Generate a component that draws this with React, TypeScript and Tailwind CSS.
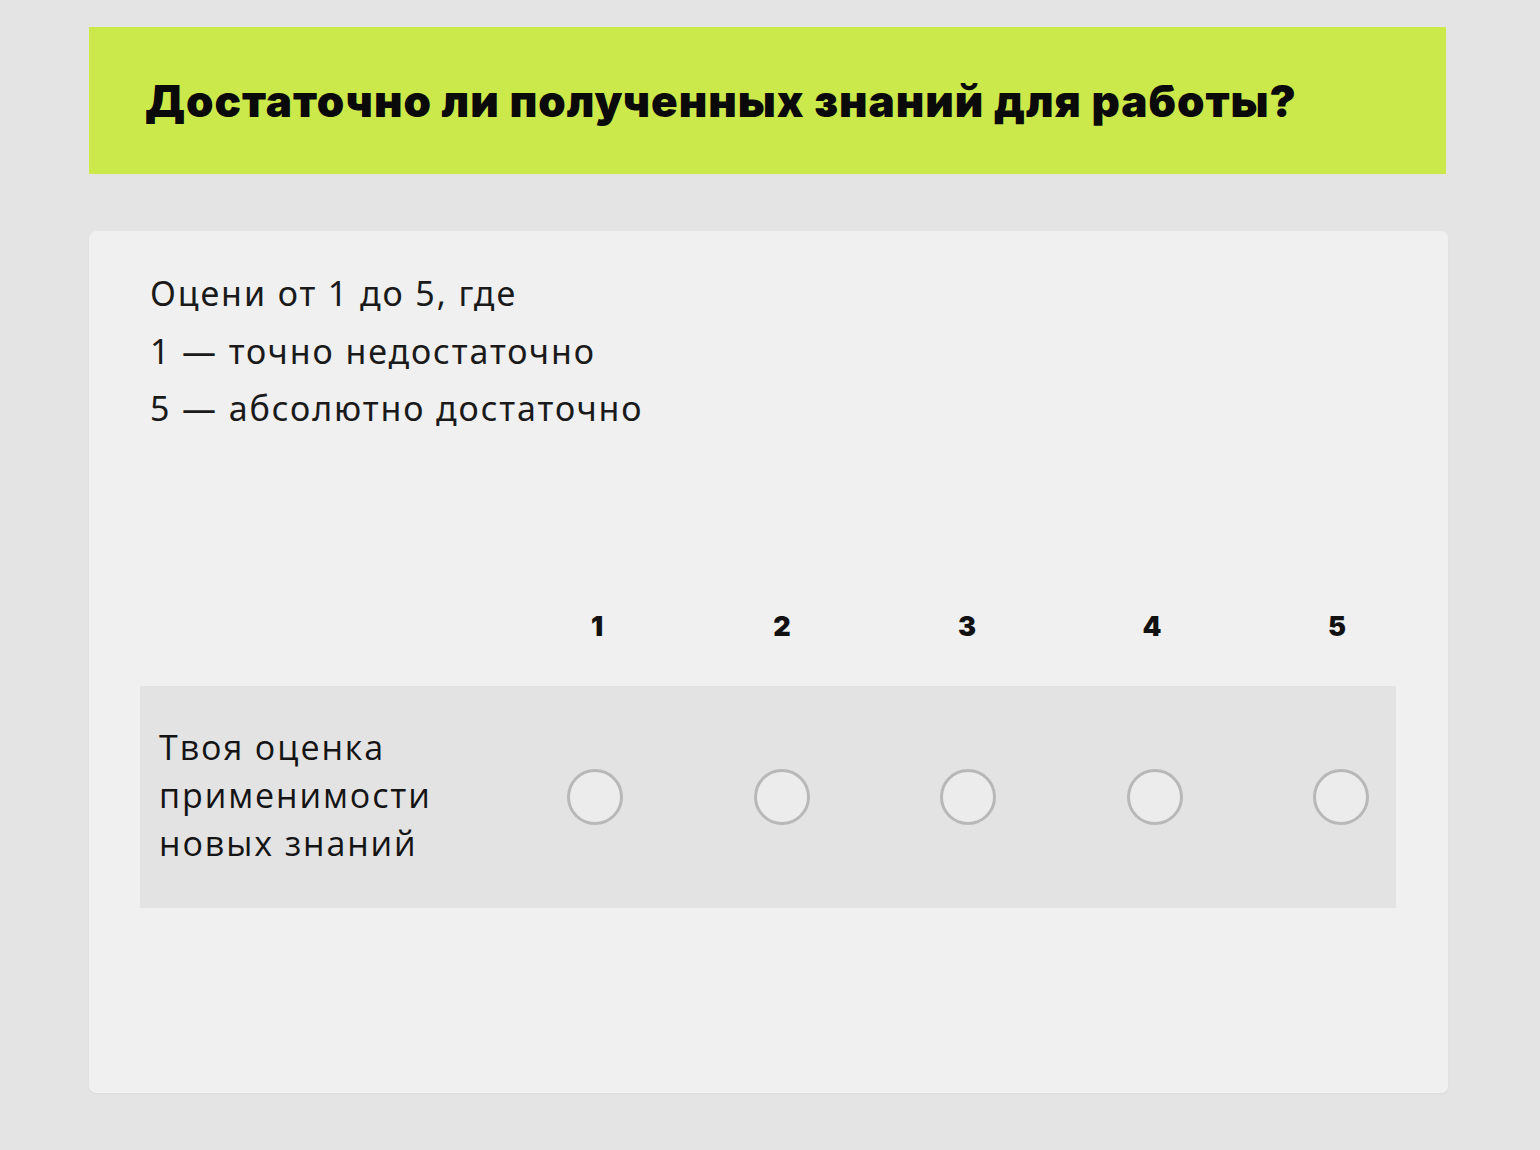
import React from "react";

export default function App() {
  const nums = [1, 2, 3, 4, 5];
  return (
    <div className="min-h-[1150px] w-[1540px] bg-[#e4e4e4] pt-[27px] pl-[89px]">
      <div className="flex h-[147px] w-[1357px] items-center bg-[#cce94b] pl-[56px]">
        <h1
          className="text-[44px] font-black leading-none tracking-[0.95px] text-[#0a0a0a]"
          style={{ fontFamily: "Inter, 'Noto Sans', sans-serif" }}
        >
          Достаточно ли полученных знаний для работы?
        </h1>
      </div>

      <div className="mt-[57px] h-[862px] w-[1359px] rounded-[7px] bg-[#f0f0f0] pt-[34px] shadow-[0_1px_2px_rgba(0,0,0,0.04)]">
        <div
          className="pl-[61px] text-[34px] leading-[57.5px] tracking-[1.9px] text-[#1a1a1a]"
          style={{ fontFamily: "'Noto Sans', 'Open Sans', sans-serif" }}
        >
          <p>Оцени от 1 до 5, где</p>
          <p>1 — точно недостаточно</p>
          <p>5 — абсолютно достаточно</p>
        </div>

        <div
          className="mt-[176px] flex gap-[129px] pl-[480px]"
          style={{ fontFamily: "Inter, 'Noto Sans', sans-serif" }}
        >
          {nums.map((n) => (
            <div
              key={n}
              className="w-[56px] text-center text-[27px] font-black leading-[26px] text-[#111]"
            >
              {n}
            </div>
          ))}
        </div>

        <div className="ml-[51px] mt-[46px] flex h-[222px] w-[1256px] items-center bg-[#e3e3e3]">
          <div
            className="w-[427px] pb-[4px] pl-[19px] text-[34px] leading-[48px] tracking-[1.9px] text-[#141414]"
            style={{ fontFamily: "'Open Sans', 'Noto Sans', sans-serif" }}
          >
            <p>Твоя оценка</p>
            <p>применимости</p>
            <p>новых знаний</p>
          </div>
          <div className="flex gap-[130.5px]">
            {nums.map((n) => (
              <div
                key={n}
                className="h-[56px] w-[56px] rounded-full border-[3px] border-[#b8b8b8] bg-[#ececec]"
              />
            ))}
          </div>
        </div>
      </div>
    </div>
  );
}
